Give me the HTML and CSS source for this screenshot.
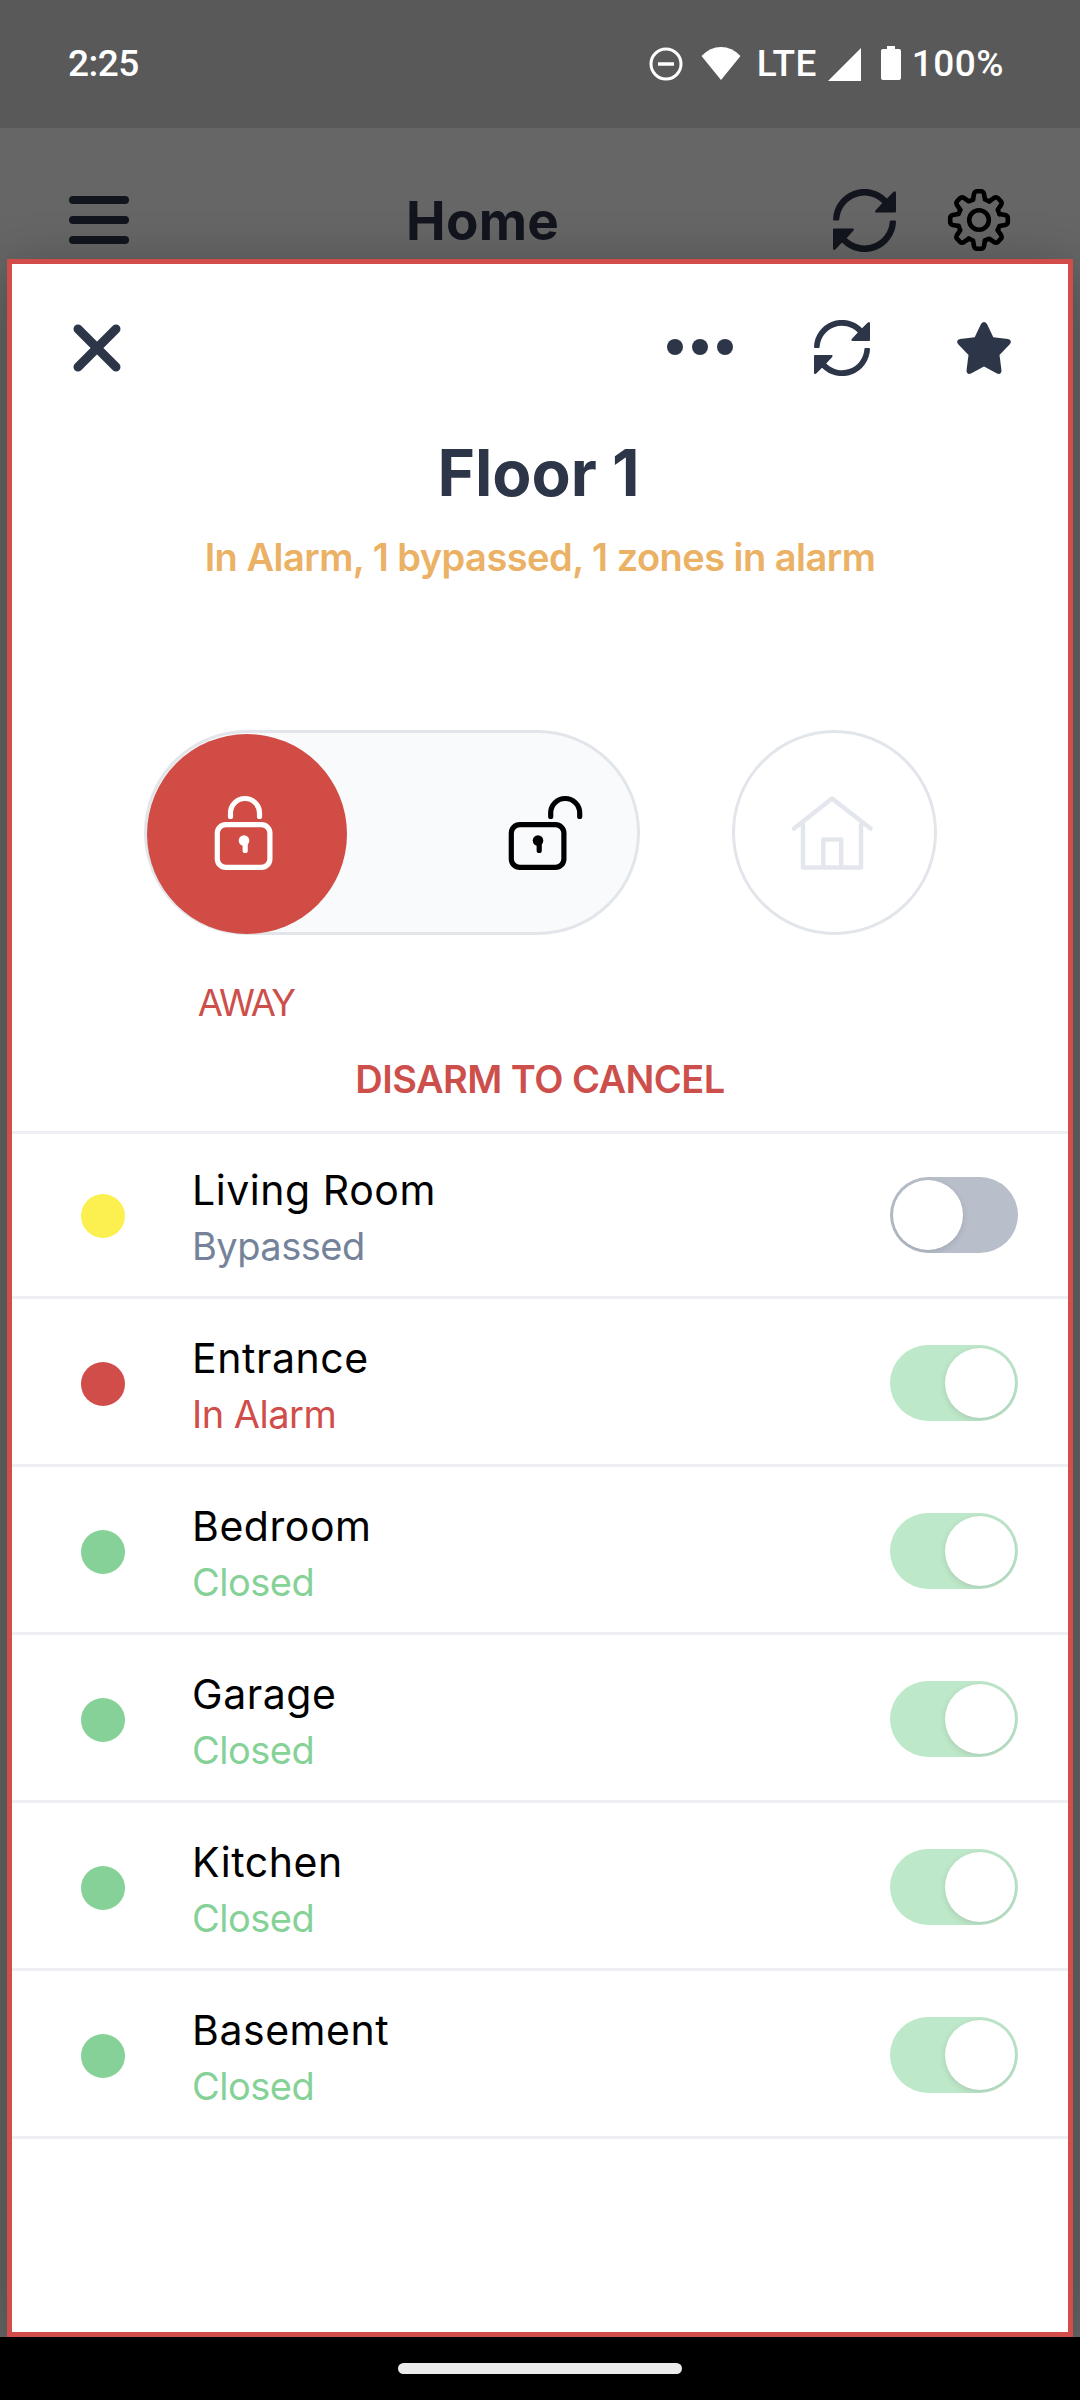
FILE: index.html
```html
<!DOCTYPE html>
<html lang="en">
<head>
<meta charset="utf-8">
<title>Floor 1</title>
<link rel="stylesheet" href="styles.css">
</head>
<body>
<svg class="defs" width="0" height="0" aria-hidden="true">
  <symbol id="half-refresh" viewBox="0 0 63 63">
    <path d="M0 30A31.5 31.5 0 0 1 54 9.4L60.5 2.8Q63 1 63 4V22.500Q63 23.500 62 23.500H43.500Q41.300 23.500 42.500 21.500L49.300 14A25.200 25.200 0 0 0 6.300 30Q6.300 31.500 5.300 31.500H1Q0 31.500 0 30Z"/>
  </symbol>
  <symbol id="refresh" viewBox="0 0 63 63">
    <use href="#half-refresh" width="63" height="63"/>
    <use href="#half-refresh" width="63" height="63" transform="rotate(180 31.5 31.5)"/>
  </symbol>
</svg>
<div class="screen">
  <header class="status-bar">
    <span class="clock">2:25</span>
    <div class="status-icons">
      <svg class="dnd" width="34" height="34" viewBox="0 0 34 34"><circle cx="17" cy="17" r="15" fill="none" stroke="#fff" stroke-width="3"/><path d="M9 17H25" stroke="#fff" stroke-width="3.500"/></svg>
      <svg class="wifi" width="40" height="33" viewBox="0 0 40 33"><path d="M0.500 9Q9 0 20 0T39.500 9L20 33Z" fill="#fff"/></svg>
      <span class="lte">LTE</span>
      <svg class="signal" width="33" height="33" viewBox="0 0 33 33"><path d="M33 0V33H0Z" fill="#fff"/></svg>
      <svg class="battery" width="20" height="34" viewBox="0 0 20 34"><path d="M6 0H14V3H18Q20 3 20 5V32Q20 34 18 34H2Q0 34 0 32V5Q0 3 2 3H6Z" fill="#fff"/></svg>
      <span class="percent">100%</span>
    </div>
  </header>
  <div class="app-bar">
    <div class="menu"><i></i><i></i><i></i></div>
    <h2 class="app-title">Home</h2>
    <svg class="app-refresh" width="63" height="63"><use href="#refresh"/></svg>
    <svg class="gear" width="64" height="64" viewBox="-32 -32 64 64">
      <defs><path id="tooth" d="M-6 -20.500L-5 -26Q-4.300 -28.800 -2 -28.800H2Q4.300 -28.800 5 -26L6 -20.500L10.250 -18.700"/></defs>
      <g>
        <use href="#tooth"/><use href="#tooth" transform="rotate(45)"/><use href="#tooth" transform="rotate(90)"/><use href="#tooth" transform="rotate(135)"/>
        <use href="#tooth" transform="rotate(180)"/><use href="#tooth" transform="rotate(225)"/><use href="#tooth" transform="rotate(270)"/><use href="#tooth" transform="rotate(315)"/>
        <circle r="9.800"/>
      </g>
    </svg>
  </div>
  <main class="sheet">
    <div class="toolbar">
      <svg width="48" height="48" viewBox="0 0 48 48"><path d="M5 5L43 43M43 5L5 43" stroke="#2d3548" stroke-width="9" stroke-linecap="round"/></svg>
      <svg class="dots" width="66" height="16" viewBox="0 0 66 16"><circle cx="8" cy="8" r="8"/><circle cx="33" cy="8" r="8"/><circle cx="58" cy="8" r="8"/></svg>
      <svg class="sheet-refresh" width="56" height="56"><use href="#refresh"/></svg>
      <svg class="star" width="54" height="52" viewBox="0 0 54 52"><path d="M24 2Q27 -2 30 2L36.300 15.300L51 17Q55.500 18.300 53 22L42.500 33L44.500 48.500Q44.300 53 40 51.500L27 44.500L14 51.500Q9.700 53 9.500 48.500L11.500 33L1 22Q-1.500 18.300 3 17L17.700 15.300Z"/></svg>
    </div>
    <h1>Floor 1</h1>
    <p class="summary">In Alarm, 1 bypassed, 1 zones in alarm</p>
    <div class="controls">
      <div class="arm-switch">
        <svg class="knob" width="200" height="200" viewBox="0 0 200 200"><g fill="none" stroke="#fff" stroke-width="5.200" stroke-linecap="round"><rect x="70.300" y="90.600" width="52.600" height="42.800" rx="8.500"/><path d="M83.500 82.500V79a14.500 14.500 0 0 1 29 0V82.500M98.200 108V116.500"/></g><circle cx="97" cy="106.500" r="5.300" fill="#fff"/></svg>
        <svg class="unlock" width="196" height="200" viewBox="0 0 196 200"><g fill="none" stroke="#000" stroke-width="5.200" stroke-linecap="round"><rect x="70.300" y="90.600" width="52.600" height="42.800" rx="8.500"/><path d="M109.700 82.500V79a14.500 14.500 0 0 1 29 0V82.500M98.200 108V116.500"/></g><circle cx="97" cy="106.500" r="5.300"/></svg>
      </div>
      <div class="stay">
        <svg width="199" height="199" viewBox="0 0 199 199"><path d="M59 95.500L97 65.500L135.500 95.500M68 92V134.500H126V92M88.300 134V106.500H106.200V134" fill="none" stroke="#e3e7ed" stroke-width="4.500" stroke-linecap="round" stroke-linejoin="round"/></svg>
      </div>
    </div>
    <p class="mode">AWAY</p>
    <p class="cancel">DISARM TO CANCEL</p>
    <ul class="zones">
      <li class="zone bypassed"><i class="dot"></i><div class="info"><span class="name">Living Room</span><span class="state">Bypassed</span></div><span class="switch"></span></li>
      <li class="zone alarm"><i class="dot"></i><div class="info"><span class="name">Entrance</span><span class="state">In Alarm</span></div><span class="switch on"></span></li>
      <li class="zone"><i class="dot"></i><div class="info"><span class="name">Bedroom</span><span class="state">Closed</span></div><span class="switch on"></span></li>
      <li class="zone"><i class="dot"></i><div class="info"><span class="name">Garage</span><span class="state">Closed</span></div><span class="switch on"></span></li>
      <li class="zone"><i class="dot"></i><div class="info"><span class="name">Kitchen</span><span class="state">Closed</span></div><span class="switch on"></span></li>
      <li class="zone"><i class="dot"></i><div class="info"><span class="name">Basement</span><span class="state">Closed</span></div><span class="switch on"></span></li>
    </ul>
  </main>
  <footer class="nav"><span class="handle"></span></footer>
</div>
</body>
</html>
```
FILE: styles.css
```css
* { box-sizing: border-box; margin: 0; padding: 0; }
body { width: 1080px; height: 2400px; background: #666; font-family: Inter, sans-serif; overflow: hidden; }
svg { display: block; flex: none; }
.defs { position: absolute; }
.screen { display: flex; flex-direction: column; height: 2400px; }

.status-bar { height: 128px; flex: none; display: flex; justify-content: space-between; align-items: center; padding: 0 76px 0 68px; background: #595959; color: #fff; font: 500 37px/56px Roboto, sans-serif; }
.clock { letter-spacing: -.5px; }
.status-icons { display: flex; align-items: center; }
.wifi { margin-left: 18px; margin-top: -2px; }
.lte { margin-left: 16px; letter-spacing: .3px; }
.signal { margin-left: 11px; }
.battery { margin-left: 20px; margin-top: -2px; }
.percent { margin-left: 11px; letter-spacing: .5px; }

.app-bar { height: 131px; flex: none; display: flex; align-items: center; padding: 53px 69px 0 69px; }
.menu { width: 60px; display: grid; gap: 11.500px; }
.menu i { height: 8.200px; border-radius: 4px; background: #12151d; }
.app-title { margin-left: 277px; font-size: 53px; font-weight: 700; line-height: 60px; letter-spacing: .3px; padding-top: 1px; color: #12151d; }
.app-refresh { margin-left: auto; fill: #12151d; }
.gear { margin-left: 51px; fill: none; stroke: #000; stroke-width: 4.600; stroke-linecap: round; stroke-linejoin: round; }

.sheet { height: 2078px; flex: none; margin: 0 7px; border: 5px solid #d04d4a; background: #fff; box-shadow: 0 10px 50px rgba(0, 0, 0, .3); }
.toolbar { height: 168px; display: flex; align-items: center; padding: 0 57px 0 61px; fill: #2d3548; }
.dots { margin-left: auto; margin-top: -2px; }
.sheet-refresh { margin-left: 81px; }
.star { margin-left: 87px; }
h1 { height: 82px; padding-right: 3px; text-align: center; font-size: 64px; font-weight: 700; line-height: 82px; color: #2d3548; }
.summary { text-align: center; font-size: 38px; font-weight: 600; line-height: 86px; letter-spacing: -.53px; color: #ebb165; }
.controls { display: flex; gap: 92px; margin-top: 130px; padding-left: 132px; }
.arm-switch { width: 496px; height: 205px; display: flex; justify-content: space-between; border: 3px solid #e2e6eb; border-radius: 103px; background: #f9fafc; }
.knob { margin-top: 1px; border-radius: 50%; background: #d14c45; }
.unlock { margin-top: 1px; }
.stay { width: 205px; height: 205px; border: 3px solid #e2e6eb; border-radius: 50%; }
.mode { width: 200px; margin: 44px 0 0 134px; text-align: center; font-size: 36.500px; line-height: 48px; letter-spacing: -2px; color: #cd4f4b; }
.cancel { text-align: center; font-size: 38px; font-weight: 600; line-height: 104px; letter-spacing: -.55px; color: #cd4f4b; }

.zones { list-style: none; border-top: 3px solid #eeeff2; }
.zone { height: 168px; display: flex; align-items: center; padding: 5px 50px 0 69px; border-bottom: 3px solid #eeeff2; color: #86d197; }
.zone:first-child { height: 165px; padding-top: 2px; }
.bypassed { color: #75839a; }
.alarm { color: #d14d4a; }
.dot { width: 44px; height: 44px; border-radius: 50%; background: currentColor; }
.bypassed .dot { background: #fbf04f; }
.info { flex: 1; display: grid; margin: 4px 0 0 67px; }
.name { font-size: 41px; line-height: 56px; letter-spacing: .55px; color: #000; }
.state { font-size: 38px; line-height: 56px; letter-spacing: -.5px; }
.switch { width: 128px; height: 76px; margin-top: -2px; padding: 3px; display: flex; border-radius: 38px; background: #b8bfca; overflow: hidden; }
.switch::before { content: ""; width: 70px; height: 70px; border-radius: 50%; background: #fff; box-shadow: 0 2px 6px rgba(0, 0, 0, .12); }
.switch.on { justify-content: flex-end; background: #bee8ca; }

.nav { height: 63px; flex: none; display: flex; justify-content: center; padding-top: 26px; background: #000; position: relative; }
.handle { width: 284px; height: 11px; border-radius: 6px; background: #ebebeb; }
```
